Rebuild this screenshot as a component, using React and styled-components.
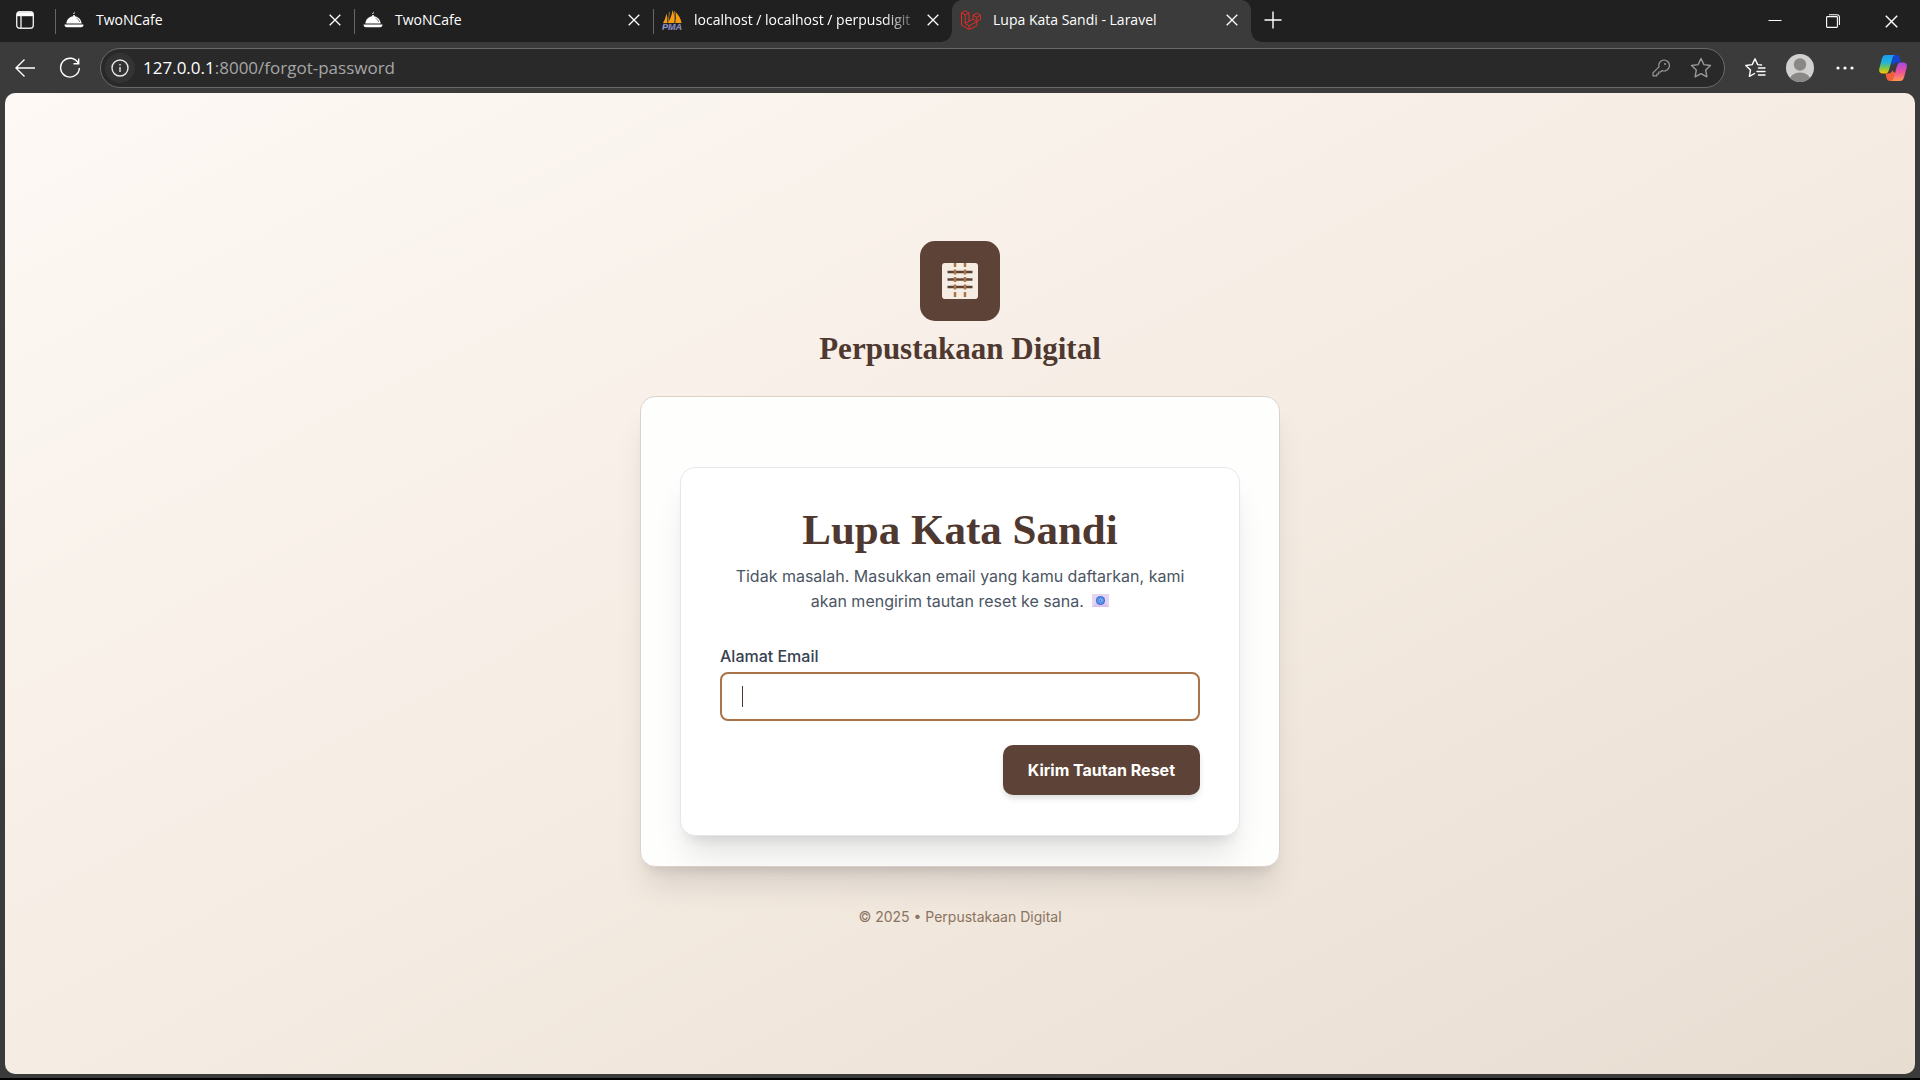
import React from "react";
import styled, { createGlobalStyle } from "styled-components";

const Global = createGlobalStyle`
  *, *::before, *::after { box-sizing: border-box; }
  body { margin: 0; background: #000; }
  button, input { font: inherit; }
  svg { display: block; flex: none; }
`;

const ui = `"Open Sans", "Noto Sans", sans-serif`;
const body = `Inter, "Open Sans", sans-serif`;
const serif = `"Liberation Serif", serif`;
const cardShadow = "0 25px 31px -6px rgba(0, 0, 0, 0.1), 0 10px 12px -7px rgba(0, 0, 0, 0.1)";

const Window = styled.div`
  min-height: 100vh;
  display: flex;
  flex-direction: column;
  background: #3b3b3b;
  border-bottom: 2px solid #000;
  font-family: ${ui};
`;

const TabStrip = styled.header`
  display: flex;
  align-items: stretch;
  height: 42px;
  background: #202020;
`;

const IconButton = styled.button`
  display: flex;
  align-items: center;
  justify-content: center;
  flex: none;
  width: ${(p) => p.$w || 45}px;
  height: ${(p) => p.$h || 40}px;
  padding: 0;
  border: 0;
  background: none;
  color: ${(p) => p.$color || "#fff"};
`;

const Tabs = styled.nav`
  display: flex;
  min-width: 0;
  padding-left: 5px;
`;

const Tab = styled.div`
  position: relative;
  display: flex;
  align-items: center;
  width: 299px;
  height: 42px;
  padding: 0 8px 2px 9px;
  color: #fff;
  font-size: 14px;
  background: ${(p) => (p.$active ? "#3b3b3b" : "transparent")};
  border-radius: 10px 10px 0 0;

  &::before {
    content: "";
    position: absolute;
    left: 0;
    top: 9px;
    height: 25px;
    width: 1px;
    background: ${(p) => (p.$active ? "transparent" : "#666")};
  }
`;

const Flare = styled.span`
  position: absolute;
  bottom: 0;
  ${(p) => p.$side}: -10px;
  width: 10px;
  height: 10px;
  background: radial-gradient(circle at ${(p) => p.$side} top, #202020 9px, #3b3b3b 10px);
`;

const TabTitle = styled.span`
  flex: 1;
  min-width: 0;
  padding-left: 12px;
  overflow: hidden;
  white-space: nowrap;
  line-height: 20px;
  ${(p) => p.$fade && "mask-image: linear-gradient(90deg, #000 84%, transparent);"}
`;

const Spacer = styled.div`
  flex: 1;
`;

const Toolbar = styled.div`
  display: flex;
  align-items: center;
  height: 51px;
  padding: 0 2px;
`;

const AddressBar = styled.div`
  flex: 1;
  display: flex;
  align-items: center;
  height: 40px;
  margin: 0 7px 0 8px;
  padding: 0 3px 0 4px;
  border: 1px solid #6b6b6b;
  border-radius: 20px;
  background: #292929;
`;

const SiteInfo = styled.button`
  display: flex;
  align-items: center;
  justify-content: center;
  width: 30px;
  height: 30px;
  padding: 0;
  border: 0;
  border-radius: 50%;
  background: #333;
  color: #e8e8e8;
`;

const Url = styled.div`
  flex: 1;
  padding-left: 8px;
  color: #a6a6a6;
  font-size: 17px;
  line-height: 24px;

  b {
    color: #fff;
    font-weight: 400;
  }
`;

const Page = styled.main`
  flex: 1;
  display: flex;
  flex-direction: column;
  align-items: center;
  justify-content: center;
  margin: 0 5px 4px;
  border-radius: 10px;
  background: linear-gradient(to bottom right, #fef9f5 0%, #f5ece3 50%, #e8ddd1 100%);
  font-family: ${body};
`;

const LogoTile = styled.div`
  display: flex;
  align-items: center;
  justify-content: center;
  width: 80px;
  height: 80px;
  border-radius: 15px;
  background: #5d4337;
`;

const Brand = styled.div`
  margin: 10px 0 30px;
  color: #4e3830;
  font: 700 31px/35px ${serif};
`;

const OuterCard = styled.section`
  width: 640px;
  max-width: 100%;
  padding: 70px 39px 30px;
  border: 1px solid #ddd2ca;
  border-radius: 15px;
  background: #fefefd;
  box-shadow: ${cardShadow};
`;

const Card = styled.div`
  padding: 39px 39px 40px;
  border: 1px solid #e5e7eb;
  border-radius: 15px;
  background: #fff;
  box-shadow: ${cardShadow};
`;

const Heading = styled.h1`
  margin: 0;
  color: #4e3830;
  text-align: center;
  font: 700 43px/46px ${serif};
`;

const Lead = styled.p`
  margin: 11px 0 30px;
  color: #4b5563;
  text-align: center;
  font-size: 16px;
  line-height: 25px;

  svg {
    display: inline-block;
    margin-left: 4px;
  }
`;

const Form = styled.form`
  display: flex;
  flex-direction: column;
`;

const Label = styled.label`
  color: #374151;
  font-size: 16px;
  font-weight: 500;
  line-height: 25px;
  margin-bottom: 3px;
`;

const Field = styled.div`
  position: relative;
`;

const Input = styled.input`
  display: block;
  width: 100%;
  height: 49px;
  padding: 0 20px;
  border: 2px solid #a9744a;
  border-radius: 8px;
  outline: 0;
  background: #fff;
  color: #4e3830;
  caret-color: transparent;
  font-size: 18px;
`;

const Caret = styled.span`
  position: absolute;
  left: 22px;
  top: 14px;
  width: 1px;
  height: 21px;
  background: #4e3830;
`;

const Submit = styled.button`
  align-self: flex-end;
  height: 50px;
  margin-top: 24px;
  padding: 0 25px;
  border: 0;
  border-radius: 10px;
  background: #5d4337;
  color: #fff;
  font-size: 16px;
  font-weight: 700;
  box-shadow: 0 4px 6px -1px rgba(0, 0, 0, 0.15);
`;

const Footer = styled.footer`
  margin-top: 40px;
  color: #8a7461;
  font-size: 14px;
  line-height: 20px;
`;

const Close = ({ size = 12 }) => (
  <svg width={size} height={size} viewBox="0 0 12 12" stroke="currentColor" strokeWidth="1.3" fill="none">
    <path d="M.7.7l10.6 10.6M11.3.7L.7 11.3" />
  </svg>
);

const Cloche = () => (
  <svg width="20" height="20" viewBox="0 0 20 20" fill="#fff">
    <path d="M10.6 2.2Q9 3 10.2 4" stroke="#fff" fill="none" />
    <path d="M9.2 5h1.6v1.2C14.4 6.6 17.3 9.400 17.700 13.600H2.300C2.700 9.400 5.600 6.600 9.200 6.200z" />
    <path d="M.5 14.600h19c0 1.600-.8 2.700-2.400 2.700H2.900C1.300 17.300.5 16.200.5 14.600z" />
    <path d="M12.500 8.200c1.600.7 2.700 2 3.200 3.800" stroke="#555" fill="none" strokeWidth=".8" />
  </svg>
);

const Sailboat = () => (
  <svg width="20" height="20" viewBox="0 0 20 20">
    <path d="M4.500 3.500Q6 8 5 13H1Q3.500 9 4.500 3.500zM10.500 0Q13.500 7 12 13H5.500Q9.500 8 10.500 0zM13.500 2q5 4.500 6 11h-6Q14.500 8 13.500 2z" fill="#f89c0e" />
    <path d="M7.500 2L6 13M12.500 1l.6 12" stroke="#b98a4e" strokeWidth=".8" />
    <text x="10" y="19.500" textAnchor="middle" fontFamily="Liberation Sans, sans-serif" fontWeight="700" fontStyle="italic" fontSize="9" fill="#b4b5dc" stroke="#50518a" strokeWidth=".4">PMA</text>
  </svg>
);

const LaravelMark = () => (
  <svg width="20" height="20" viewBox="0 0 20 20" fill="none" stroke="#e32b24" strokeLinejoin="round">
    <path d="M.5 2.800L4.200.7 8 2.800v8.600l4-2.300V5.200l3.800-2.200 3.800 2.200v4.200l-3.800 2.200v4.200L8.200 19.500.5 15.200z" />
    <path d="M.5 2.800l3.700 2.100L8 2.800M4.200 4.900v8.700l3.800-2.200M4.200 13.600l4 2.200 7.600-4.200M8.200 15.800v3.700M12 5.200l3.800 2.200 3.800-2.200M15.800 7.400v4.200L12 9.300" />
  </svg>
);

const TabActions = () => (
  <svg width="18" height="18" viewBox="0 0 18 18" fill="none" stroke="#e6e6e6" strokeWidth="1.400">
    <rect x=".7" y=".7" width="16.600" height="16.600" rx="3" />
    <path d="M1 3.200h16" stroke="#fff" strokeWidth="4" />
    <path d="M5 5v12" />
  </svg>
);

const Plus = () => (
  <svg width="18" height="18" viewBox="0 0 18 18" stroke="currentColor" strokeWidth="1.400">
    <path d="M9 .5v17M.5 9h17" />
  </svg>
);

const Minimize = () => (
  <svg width="14" height="14" viewBox="0 0 14 14" stroke="#fff">
    <path d="M.5 6.500h13" />
  </svg>
);

const Restore = () => (
  <svg width="14" height="14" viewBox="0 0 14 14" stroke="#fff" fill="none" strokeWidth="1.100">
    <rect x=".6" y="2.600" width="10.800" height="10.800" rx=".8" />
    <path d="M3 .7h8a2.400 2.400 0 0 1 2.400 2.400V11" />
  </svg>
);

const Back = () => (
  <svg width="20" height="18" viewBox="0 0 20 18" stroke="currentColor" strokeWidth="1.400" fill="none">
    <path d="M20 9H1M9.500.6L1 9l8.500 8.400" />
  </svg>
);

const Reload = () => (
  <svg width="22" height="22" viewBox="0 0 22 22" stroke="currentColor" strokeWidth="1.400" fill="none">
    <path d="M19.300 6.200A9.400 9.400 0 1 0 20.400 11M19.700 1.500v5.200h-5.200" />
  </svg>
);

const Info = () => (
  <svg width="18" height="18" viewBox="0 0 18 18" stroke="currentColor" strokeWidth="1.400" fill="none">
    <circle cx="9" cy="9" r="8" />
    <path d="M9 8v5" />
    <path d="M9 5v1.600" />
  </svg>
);

const Key = () => (
  <svg width="18" height="18" viewBox="0 0 18 18" stroke="currentColor" strokeWidth="1.200" fill="none" strokeLinejoin="round">
    <path d="M11.500 1a5.500 5.500 0 1 1-1.600 10.600L8.500 13H6.700v2H4.900v1.800H1v-3l6-6A5.500 5.500 0 0 1 11.500 1z" />
    <circle cx="13" cy="5" r="1" fill="currentColor" stroke="none" />
  </svg>
);

const Star = () => (
  <svg width="22" height="22" viewBox="0 0 22 22" stroke="currentColor" strokeWidth="1.400" fill="none" strokeLinejoin="round">
    <path d="M11 1.500l2.900 6.100 6.600.9-4.800 4.600 1.200 6.700L11 16.600l-5.900 3.200 1.200-6.700L1.500 8.500l6.600-.9z" />
  </svg>
);

const Favorites = () => (
  <svg width="22" height="22" viewBox="0 0 22 22" stroke="currentColor" strokeWidth="1.400" fill="none" strokeLinejoin="round" strokeLinecap="round">
    <path d="M17.500 8L13.700 7.600 11 1.800 8.200 7.600l-6.400.9 4.700 4.400-1.100 6.400 5.200-2.800M14.500 11H21M13 14.500h8M14.500 18H21" />
  </svg>
);

const Avatar = () => (
  <svg width="28" height="28" viewBox="0 0 28 28">
    <clipPath id="avatar"><circle cx="14" cy="14" r="14" /></clipPath>
    <g clipPath="url(#avatar)">
      <rect width="28" height="28" fill="#d2d0ce" />
      <circle cx="14" cy="10.500" r="6.200" fill="#8a8886" />
      <ellipse cx="14" cy="25.500" rx="10" ry="7" fill="#8a8886" />
    </g>
  </svg>
);

const Dots = () => (
  <svg width="18" height="4" viewBox="0 0 18 4" fill="currentColor">
    <circle cx="2" cy="2" r="1.600" /><circle cx="9" cy="2" r="1.600" /><circle cx="16" cy="2" r="1.600" />
  </svg>
);

const Copilot = () => (
  <svg width="28" height="26" viewBox="0 0 28 26">
    <defs>
      <linearGradient id="cool" x1="0" y1="0" x2="0" y2="1">
        <stop offset="0" stopColor="#1b9af0" /><stop offset=".4" stopColor="#20b4d8" /><stop offset=".7" stopColor="#7cc64a" /><stop offset="1" stopColor="#ffc800" />
      </linearGradient>
      <linearGradient id="warm" x1="0" y1="0" x2="0" y2="1">
        <stop offset="0" stopColor="#a14be8" /><stop offset=".5" stopColor="#ee4f9c" /><stop offset="1" stopColor="#ff9a4d" />
      </linearGradient>
    </defs>
    <path d="M12 0h5.500c2 0 2.800 1.200 3.300 2.800L22 7.500h-3c-2.500 0-3.800 1-4.400 3L12 8z" fill="#1744c8" />
    <path d="M16 26h-5c-2 0-3-1-3.500-3L6.500 18.500H9c2.500 0 3.600-1 4.200-3L16 18z" fill="#f0603c" />
    <path d="M7 0h9.500c-1.700 0-2.500 1-3 2.800L10 15c-.8 2.500-1.800 3.500-4 3.500H3.500C.8 18.500-.4 16.400.3 13.500l2.700-10C3.700 1 5 0 7 0z" fill="url(#cool)" />
    <path d="M21 26h-9.500c1.700 0 2.500-1 3-2.800L18 11c.8-2.500 1.800-3.500 4-3.500h2.500c2.700 0 3.900 2.100 3.200 5l-2.700 10C24.300 25 23 26 21 26z" fill="url(#warm)" />
  </svg>
);

const BookLogo = () => (
  <svg width="36" height="36" viewBox="0 0 36 36">
    <rect width="36" height="36" rx="3" fill="#f5ede3" />
    <path d="M5.500 9h25M5.500 16.500h25M5.500 24h25" stroke="#5d4337" strokeWidth="2.500" />
    <path d="M13 -1v36M23 -1v36" stroke="#b07440" strokeWidth="2.500" strokeDasharray="5 2.500" />
  </svg>
);

const Envelope = () => (
  <svg width="17" height="13" viewBox="0 0 17 13">
    <rect width="17" height="13" fill="#e6d5f2" />
    <path d="M0 13l6-6h5l6 6z" fill="#dcc3ee" />
    <circle cx="8.500" cy="6.500" r="4.600" fill="#3b78d8" />
    <circle cx="8.500" cy="6.500" r="1.400" fill="none" stroke="#c9dcff" strokeWidth=".6" />
    <path d="M9.900 5v2.200c.3 1 1.500.6 1.400-.7a2.800 2.800 0 1 0-1.300 2.400" fill="none" stroke="#c9dcff" strokeWidth=".4" />
  </svg>
);

const tabs = [
  { title: "TwoNCafe", icon: <Cloche /> },
  { title: "TwoNCafe", icon: <Cloche /> },
  { title: "localhost / localhost / perpusdigit", icon: <Sailboat />, fade: true },
  { title: "Lupa Kata Sandi - Laravel", icon: <LaravelMark />, active: true },
];

export default function App() {
  return (
    <Window>
      <Global />
      <TabStrip>
        <IconButton $w={50} aria-label="Tab actions"><TabActions /></IconButton>
        <Tabs>
          {tabs.map((t, i) => (
            <Tab key={i} $active={t.active}>
              {t.active && <Flare $side="left" />}
              {t.icon}
              <TabTitle $fade={t.fade}>{t.title}</TabTitle>
              <IconButton $w={22} $h={22} aria-label="Close tab"><Close /></IconButton>
              {t.active && <Flare $side="right" />}
            </Tab>
          ))}
        </Tabs>
        <IconButton $w={44} aria-label="New tab"><Plus /></IconButton>
        <Spacer />
        <IconButton $w={58} $h={42} aria-label="Minimize"><Minimize /></IconButton>
        <IconButton $w={58} $h={42} aria-label="Restore"><Restore /></IconButton>
        <IconButton $w={58} $h={42} aria-label="Close"><Close size={13} /></IconButton>
      </TabStrip>
      <Toolbar>
        <IconButton aria-label="Back"><Back /></IconButton>
        <IconButton aria-label="Reload"><Reload /></IconButton>
        <AddressBar>
          <SiteInfo aria-label="Site information"><Info /></SiteInfo>
          <Url><b>127.0.0.1</b>:8000/forgot-password</Url>
          <IconButton $w={40} $h={38} $color="#999" aria-label="Passwords"><Key /></IconButton>
          <IconButton $w={40} $h={38} $color="#999" aria-label="Add to favorites"><Star /></IconButton>
        </AddressBar>
        <IconButton aria-label="Favorites"><Favorites /></IconButton>
        <IconButton aria-label="Profile"><Avatar /></IconButton>
        <IconButton aria-label="More"><Dots /></IconButton>
        <IconButton $w={51} aria-label="Copilot"><Copilot /></IconButton>
      </Toolbar>
      <Page>
        <LogoTile><BookLogo /></LogoTile>
        <Brand>Perpustakaan Digital</Brand>
        <OuterCard>
          <Card>
            <Heading>Lupa Kata Sandi</Heading>
            <Lead>
              Tidak masalah. Masukkan email yang kamu daftarkan, kami akan mengirim tautan reset ke sana. <Envelope />
            </Lead>
            <Form onSubmit={(e) => e.preventDefault()}>
              <Label htmlFor="email">Alamat Email</Label>
              <Field>
                <Input id="email" type="email" autoFocus />
                <Caret />
              </Field>
              <Submit type="submit">Kirim Tautan Reset</Submit>
            </Form>
          </Card>
        </OuterCard>
        <Footer>© 2025 • Perpustakaan Digital</Footer>
      </Page>
    </Window>
  );
}
